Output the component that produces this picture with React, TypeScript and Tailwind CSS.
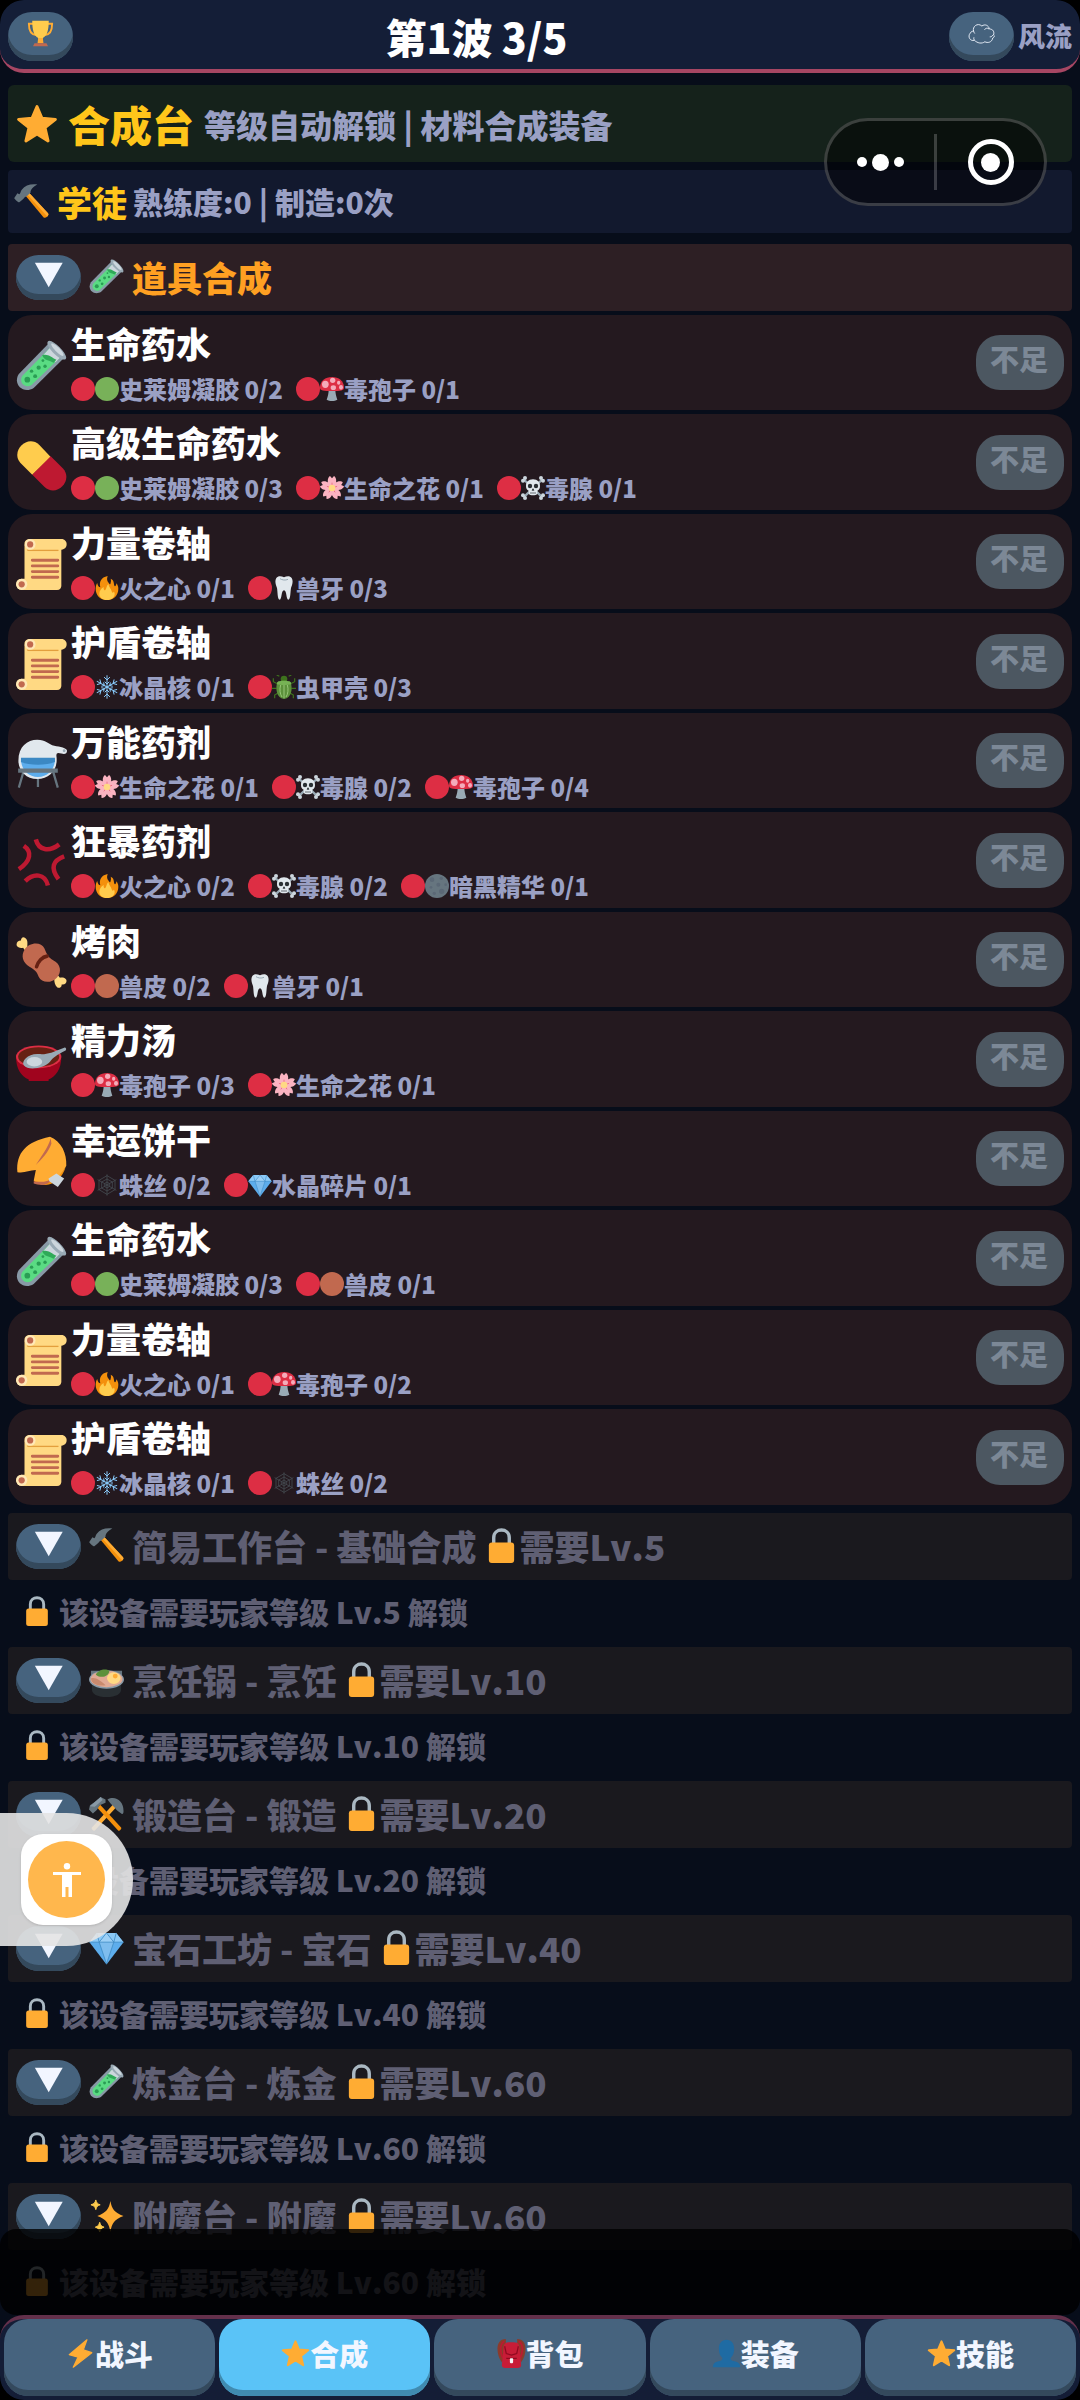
import type { ReactNode } from 'react';
import { clsx } from 'clsx';

/* ---------- Icons ---------- */

const ICONS: Record<string, ReactNode> = {
  red: <circle cx="18" cy="18" r="18" fill="#dd2e44" />,
  green: <circle cx="18" cy="18" r="18" fill="#78b159" />,
  brown: <circle cx="18" cy="18" r="18" fill="#c1694f" />,
  dark: (
    <>
      <circle cx="18" cy="18" r="18" fill="#66757f" />
      <g fill="#5b6876">
        <circle cx="10.5" cy="8.5" r="3.5" />
        <circle cx="20" cy="16" r="3" />
        <circle cx="24.5" cy="6.5" r="2.5" />
        <circle cx="9" cy="20" r="2" />
        <circle cx="25" cy="26" r="4" />
        <circle cx="14" cy="29" r="2.5" />
        <circle cx="31" cy="16" r="2" />
      </g>
    </>
  ),
  star: (
    <path
      d="M18 3l4.300 10.100 11.500.900-8.900 7.200 2.600 11.300L18 26.600l-9.500 5.900 2.600-11.300-8.900-7.200 11.500-.900z"
      fill="#ffac33"
      stroke="#ffac33"
      strokeWidth="2.500"
      strokeLinejoin="round"
    />
  ),
  trophy: (
    <>
      <path
        d="M9 5H2.500c0 8 1.500 14.500 9.500 15M27 5h6.500c0 8-1.500 14.500-9.500 15"
        fill="none"
        stroke="#ffac33"
        strokeWidth="2.500"
      />
      <path d="M7 1h22c0 12-2 20-8 23v6h-6v-6C9 21 7 13 7 1z" fill="#ffcc4d" />
      <path d="M15 24h6l1 7h-8z" fill="#ffac33" />
      <path d="M10 31h16l2 4H8z" fill="#c1694f" />
    </>
  ),
  hammer: (
    <>
      <path d="M11.500 11.500l3.500-3 20 21.500c1.500 2-2.500 6-4.500 4.500z" fill="#f4900c" />
      <path d="M13 10l2-1.500 20 21.500c.8 1 .2 2.500-.8 3.500z" fill="#ffac33" />
      <path
        d="M24 .6C17-.3 11.500 1.500 8 6c-1.500 2-1 3.500-2.500 4.600L3.500 9.500.3 14.300c-.5.800 4.200 5 5.200 4.500l4-3.300c.8-1.500 2-2.500 3.500-3l4-3.500C17 6 19 3.500 24 .6z"
        fill="#66757f"
      />
    </>
  ),
  tools: (
    <>
      <path d="M24.500 9l3 3L6 35.500c-1.500 1-4-1.500-3-3z" fill="#ffac33" />
      <path d="M11.500 9l-3 3L30 35.500c1.500 1 4-1.500 3-3z" fill="#f4900c" />
      <path d="M19 3.500C27-1 36 5 35.500 16c0 3-1.500 3-3 1.500-2-2-4-2.500-5-4.500l-4-4c-1-1-2.500-3-4.500-5.500z" fill="#66757f" />
      <path d="M17 3.500L12 1 5.500 6.500 1 9.500 0 14l4 4 4-3.500 3-5L17 7z" fill="#66757f" />
      <path d="M12 1L1 10.500l5 .500 8-7z" fill="#8899a6" />
    </>
  ),
  tube: (
    <>
      <path d="M23 2.500L33.500 13 12.500 33.800C5 38.500-2.500 31 2 24z" fill="#8899a6" />
      <path d="M24 5.500l7 7L11 31.800c-4.500 3-9.500-2-6.500-6.500z" fill="#5adb83" />
      <path d="M24 5.500l7 7-3 3c-3-2-6.500-1.500-9-4.500z" fill="#ccd6dd" />
      <path d="M18.500 10.800c4-1.300 6.500 1.500 10 3.200l-2 2c-4-2-6-1-8-5.200z" fill="#2faa58" />
      <path d="M22.500 1c2.500-3 15.500 10 12.500 12.500s-15-9.500-12.500-12.500z" fill="#99aab5" />
      <path d="M25 2.500c2-1 9.500 6.500 8.500 8.500S23.500 4 25 2.500z" fill="#ccd6dd" />
      <g fill="#2a9d54">
        <circle cx="8" cy="28" r="2" />
        <circle cx="13.500" cy="25.500" r="1.400" />
        <circle cx="11" cy="22" r="1.200" />
        <circle cx="16" cy="19.500" r="1.500" />
        <circle cx="20.500" cy="18.500" r="1.200" />
        <circle cx="19" cy="14.500" r="1" />
      </g>
    </>
  ),
  pill: (
    <>
      <path d="M16.500 3.500L24.500 12 11.500 24.500 3 16C-4 8 8-4.500 16.500 3.500z" fill="#ffcc4d" />
      <path d="M24.500 11.500L33 20c8 8.500-4.500 21-13 13l-8.500-8.500z" fill="#be1931" />
    </>
  ),
  scroll: (
    <>
      <path d="M6 4h26v29c0 1.500-1 3-3 3H6z" fill="#ffd983" />
      <path d="M8 4h22v4.500H8z" fill="#e39f3d" />
      <path d="M6 3c0-1.500 1.500-3 4-3h22c5 0 5 7.500 0 7.500H9C7 7.500 6 5 6 3z" fill="#ffd983" />
      <path d="M4 36c-5 0-5-8 0-8h4v8z" fill="#ffd983" />
      <circle cx="10" cy="3.800" r="3.800" fill="#ffe8b6" />
      <circle cx="10" cy="3.800" r="2.200" fill="#c1694f" />
      <circle cx="4" cy="32" r="4" fill="#ffe8b6" />
      <circle cx="4" cy="32" r="2.200" fill="#c1694f" />
      <path d="M11.500 15h18M11.500 19h18M11.500 23h18M11.500 27h18" stroke="#c1694f" strokeWidth="2" strokeLinecap="round" />
    </>
  ),
  alembic: (
    <>
      <path d="M5.500 23L2 35M26 23l3.500 12M15.500 26v8.500" stroke="#66757f" strokeWidth="1.600" />
      <path
        d="M1.700 16C1.700 6 8 1.200 15 1.200c6 0 8 3.300 12 4.300 4 .8 9 1.500 9 3.500 0 2.500-2 2.500-4 2-2-.6-3.500-1-3.500 1.500C30 22 24 29 15 29 7 29 1.700 23 1.700 16z"
        fill="#e1e8ed"
      />
      <circle cx="34" cy="9" r="1" fill="#99aab5" />
      <path d="M3.500 15h24c0 7-5 12.500-12 12.500S3.500 22 3.500 15z" fill="#5dadec" />
      <path d="M3.500 14h24v3c-6 2.500-18 2.500-24 0z" fill="#3b88c3" />
      <path d="M1.500 21.500h28v3h-28z" fill="#66757f" />
    </>
  ),
  anger: (
    <g fill="none" stroke="#be1931" strokeWidth="3.200">
      <path d="M5.500 5.500c6 4 5 11-3.500 16.500" />
      <path d="M14 1c2 8 9.500 9 16.500 3.500" />
      <path d="M34 13c-8 3-10 8-4 16" />
      <path d="M6.500 30.500c6-6 14-5.500 16 3" />
    </g>
  ),
  meat: (
    <>
      <path d="M8 7c0-3 .5-5-1.500-6.300C5-.4 3.500.600 3.500 2.500 1.500 2.500 0 4 .5 6c.5 1.500 3 2 4.500 1.500L9 13l3-3.500z" fill="#ffd983" />
      <path d="M27 29.500c0 2.500.5 4.500 2 6 1.500 1 3.500 0 3.200-2 2.500.500 4-1.500 3.300-3.300-.8-1.700-3-1.700-4.500-1.500L27 24z" fill="#ffd983" />
      <path
        d="M6 9c3-5.500 12-6 14-1 2 4.500 2.500 6.500 6.500 8.500 5 2.500 6 8 2.500 12-4 4.500-11 4-13-.5-1.500-4-3-5-6.500-7C4.500 18 3.500 13 6 9z"
        fill="#c1694f"
      />
      <path d="M22 13.500c-3.500.5-6.500 4-7.500 7.500" fill="none" stroke="#662113" strokeWidth="2.500" strokeLinecap="round" />
    </>
  ),
  soup: (
    <>
      <path d="M0 14h32c0 9-4 14-9 16v1H9v-1C4 28 0 23 0 14z" fill="#a0041e" />
      <ellipse cx="16" cy="14" rx="16" ry="8" fill="#dd2e44" />
      <ellipse cx="16" cy="14" rx="14.500" ry="6.800" fill="#662113" />
      <path d="M34 7.500c1-.5 2 1 1 2-6 3-9 5-11 8-3 4-15 7-18.500 2.500-2-3 3-8.500 10.500-8 6 .500 9-1 18-4.500z" fill="#99aab5" />
      <ellipse cx="13" cy="17.500" rx="5.500" ry="3.300" fill="#ccd6dd" />
    </>
  ),
  cookie: (
    <>
      <path d="M13 31c7 3 16 0 22-9-2 7-8 12.500-14 12.500-3 0-6-1-8-1.500z" fill="#f4900c" />
      <path d="M1 25.500C0 12 7 4 24 .5c8 3 12 12 11.500 20.500C33 26 27 33 20 33c-3 0-5-1-7.500-1.500L14 24C9 24 6 26.500 1 25.500z" fill="#ffac33" />
      <path d="M24.500 1.500c-2 7-7 13-10.500 19 4-4 9-9 11-15z" fill="#c1694f" />
      <path d="M12.500 32c6 1 11 0 15-3.500-3 4-6 6-9 6-2.500 0-4.500-.5-6-1z" fill="#c1694f" />
      <path d="M23 30l5.500-3.500 5.500 3.500-4.500 6-6-4z" fill="#ccd6dd" />
    </>
  ),
  mushroom: (
    <>
      <path d="M13 18h10c0 7 1 10 3 16-4 2.500-12 2.500-16 0 2-6 3-9 3-16z" fill="#99aab5" />
      <path d="M0 16C0 6 8 0 18 0s18 6 18 16c0 4-5 5-18 5S0 20 0 16z" fill="#dd2e44" />
      <g fill="#f4abba">
        <ellipse cx="19" cy="5" rx="4" ry="4" />
        <ellipse cx="8" cy="11" rx="5" ry="5.500" />
        <ellipse cx="28" cy="8.500" rx="2.500" ry="3" />
        <ellipse cx="20" cy="16" rx="4" ry="3.500" />
        <ellipse cx="31.500" cy="15.500" rx="3" ry="3.500" />
      </g>
    </>
  ),
  blossom: (
    <>
      <g fill="#fbb3c1">
        {[0, 72, 144, 216, 288].map((deg) => (
          <path key={deg} d="M18 20C9 12 11 2 15 0l3 3.500L21 0c4 2 6 12-3 20z" transform={`rotate(${deg} 18 18)`} />
        ))}
      </g>
      <g stroke="#ea596e" strokeWidth="1">
        {[0, 72, 144, 216, 288].map((deg) => (
          <path key={deg} d="M18 18V10" transform={`rotate(${deg} 18 18)`} />
        ))}
      </g>
      <circle cx="18" cy="18" r="5" fill="#ffd983" />
    </>
  ),
  skull: (
    <>
      <path d="M5 6l26 25M31 6L5 31" stroke="#99aab5" strokeWidth="3.500" />
      <g fill="#ccd6dd">
        <circle cx="6" cy="3" r="3" />
        <circle cx="3" cy="7" r="3" />
        <circle cx="30" cy="3" r="3" />
        <circle cx="33" cy="7" r="3" />
        <circle cx="6" cy="33" r="3" />
        <circle cx="3" cy="29" r="3" />
        <circle cx="30" cy="33" r="3" />
        <circle cx="33" cy="29" r="3" />
      </g>
      <path d="M18 5c7 0 10.500 4.500 10.500 10 0 4-1.500 6-4 7v5c-2 2.500-11 2.500-13 0v-5c-2.500-1-4-3-4-7C7.500 9.500 11 5 18 5z" fill="#e1e8ed" />
      <circle cx="13.500" cy="15" r="3.300" fill="#292f33" />
      <circle cx="22.500" cy="15" r="3.300" fill="#292f33" />
      <path d="M16.500 21.500L18 19l1.500 2.500zM15 24v3M18 24v3M21 24v3" fill="#292f33" stroke="#292f33" />
    </>
  ),
  fire: (
    <>
      <path
        d="M35 19c0 10-7 17-17 17S1 29 1 19c0-3 .8-6 2.300-8.500.7 4 2.700 6.500 4.700 6.500C6 9 9 2 19 0c-2 6 0 8 2 11 1 2 2 2 2.500-1 1-3 0-6 0-6 6 2 4 9 6 11 1 1 2.500-1 2.500-4 1.800 2 3 5 3 8z"
        fill="#f4900c"
      />
      <path
        d="M28 23.500c-.8 3-2.500 1.500-3-.500-.8-4-4-6-5-11-3 3-2.500 7-4.500 9-1.500 1.500-3-1-2.500-4.500-4 2.500-6.500 6-6.500 10.500 0 5 4.500 9 11.500 9s11.500-4 11.500-9c0-2-.5-3-1.500-3.500z"
        fill="#ffcc4d"
      />
    </>
  ),
  tooth: (
    <>
      <path
        d="M6.500 3C9-.5 14 0 18 2c4-2 9-2.500 11.500 1 3 5 .5 11-1 15-1 5-.5 17-4 17.500-3.500 0-2-14-6.500-14S15 35.500 11.500 35.500C8 35 8.500 23 7.500 18c-1.500-4-4-10-1-15z"
        fill="#e1e8ed"
      />
      <path d="M12 4c3 2 8 3 12 1" fill="none" stroke="#99aab5" strokeWidth="1.500" />
    </>
  ),
  snow: (
    <g fill="none" stroke="#88c9f9" strokeWidth="1.500" strokeLinecap="round">
      {[0, 60, 120, 180, 240, 300].map((deg) => (
        <path key={deg} d="M18 18V1M14 3.500l4 4 4-4M15 10.500l3 3 3-3" transform={`rotate(${deg} 18 18)`} />
      ))}
    </g>
  ),
  beetle: (
    <>
      <path d="M11 2L7 0M25 2l4-2M8 13L2 10V5M28 13l6-3V5M7 20H0M29 20h7M9 27l-5 3v5M27 27l5 3v5" stroke="#3e721d" strokeWidth="1.800" fill="none" />
      <circle cx="18" cy="6" r="5" fill="#3e721d" />
      <path d="M8 11c3-3 17-3 20 0 3 8 2 24-10 25C6 35 5 19 8 11z" fill="#5c913b" />
      <path d="M8 11c3-3 17-3 20 0l.8 3c-6 1.500-15.500 1.500-21.500 0z" fill="#77b255" />
      <path d="M13 15c-2 6-1 14 2 18M18 15v20M23 15c2 6 1 14-2 18" stroke="#a6d388" strokeWidth="1.200" fill="none" />
    </>
  ),
  web: (
    <g fill="none" stroke="#454b52" strokeWidth="1.200">
      <path d="M18 2v32M4 10l28 16M32 10L4 26" />
      <path d="M18 4L6 11v14l12 7 12-7V11z" />
      <path d="M18 9l-8 4.500v9L18 27l8-4.500v-9z" />
      <path d="M18 13.500L14 16v4l4 2.500 4-2.500v-4z" />
    </g>
  ),
  gem: (
    <>
      <path d="M8 3h20l7.500 9.500L18 35.500.5 12.500z" fill="#5dadec" />
      <path d="M8 3h20l7.500 9.500H.5z" fill="#8ccaf7" />
      <path d="M18 3l-7.500 9.500h15zM10.500 12.500L18 35.500l7.500-23z" fill="#bdddf4" fillOpacity=".35" />
      <path d="M8 3l2.500 9.500L18 3l7.500 9.500L28 3M.5 12.500h35M10.500 12.500L18 35l7.500-22.500" fill="none" stroke="#3b88c3" strokeWidth=".8" />
    </>
  ),
  lock: (
    <>
      <path d="M10 18v-8c0-10.500 16-10.500 16 0v8" fill="none" stroke="#aab8c2" strokeWidth="3.500" />
      <rect x="5" y="15" width="26" height="21" rx="3" fill="#ffac33" />
    </>
  ),
  pan: (
    <>
      <path d="M2 9h32v5H2z" fill="#66757f" />
      <path d="M3 18h30v10c0 5-5 8-15 8S3 33 3 28z" fill="#292f33" />
      <ellipse cx="18" cy="18" rx="18" ry="9.500" fill="#8899a6" />
      <ellipse cx="18" cy="17.500" rx="16.500" ry="8.500" fill="#e0aa94" />
      <path d="M2 17c4-2 10 2 15 7-8 1-14-1-15-7z" fill="#c98a6e" />
      <ellipse cx="25.500" cy="16.500" rx="7" ry="6" fill="#ffd983" />
      <circle cx="27" cy="14.500" r="2.500" fill="#ffac33" />
      <path d="M7 13c2-5 10-7 14-4 0 5-8 9-14 4z" fill="#5c913b" />
    </>
  ),
  sparkles: (
    <>
      <path d="M22 3c1.500 8 4 12 13.500 15.500C26 22 23.500 26 22 35c-1.500-9-4-13-13.500-16.500C18 15 20.500 11 22 3z" fill="#ffac33" />
      <path d="M7 2c.8 3 1.500 4 4.500 5-3 1-3.700 2-4.500 5-.8-3-1.500-4-5-5 3.500-1 4.200-2 5-5z" fill="#ffcc4d" stroke="#ffcc4d" />
      <path d="M11 25c.8 3 1.500 4 4.500 5-3 1-3.700 2-4.500 5-.8-3-1.500-4-4.500-5 3-1 3.700-2 4.500-5z" fill="#ffcc4d" stroke="#ffcc4d" />
    </>
  ),
  bolt: (
    <path d="M26 1L4 19.500l11 3L9 35 32 17l-10.500-3.500z" fill="#ffac33" stroke="#ffac33" strokeWidth="1.500" strokeLinejoin="round" />
  ),
  backpack: (
    <>
      <path d="M11 0C-3 0-1 20 6 29l5-9V8zM25 0c14 0 12 20 5 29l-5-9V8z" fill="#8c3a2b" />
      <path d="M9 3c-5 2-6 12-2 20M27 3c5 2 6 12 2 20" fill="none" stroke="#be1931" strokeWidth="2" />
      <path d="M8 12C8 5 11 4 18 4s10 1 10 8l2 21c0 2-2 3-4 3H10c-2 0-4-1-4-3z" fill="#c81c37" />
      <path d="M9.500 9l2 9 6.500 2 6.500-2 2-9M11.500 24h13" fill="none" stroke="#8f0a20" strokeWidth="1.500" />
      <rect x="16" y="24" width="4" height="6" rx="1" fill="#f5f8fa" />
    </>
  ),
  person: (
    <path
      d="M18 1c6 0 9.500 4.500 9.500 11 0 5-1.500 9-4.500 11.500 0 3 2 3.500 6 4.500 4 1 6 3 6 7H1c0-4 2-6 6-7 4-1 6-1.500 6-4.500C10 21 8.500 17 8.500 12 8.500 5.500 12 1 18 1z"
      fill="#1f6ba3"
    />
  ),
  cloud: (
    <path
      d="M8.500 27C3 29-1 22 3 17.500c1-2 3-3 4.500-2.500-2-6 5-12 11-7 4-3 9-1 10 4 5 0 7 4 5.500 8 2 1 1 3-1 4-1 6-7 7-10.500 5-4 3-10 2-14-2zM9 18c-1-1-1-2-1.500-3M22 13c1-2 4-3 6-1M33 20c-1 2-2 2.500-4 2.500M8.500 27c-1-2-1-3-.5-4"
      fill="none"
      stroke="#f2f6ff"
      strokeWidth="1.200"
    />
  ),
  down: <path d="M3 5h29.500L17.700 31z" fill="#f2f6ff" />,
};

function Icon({ name, className }: { name: string; className: string }) {
  return (
    <svg viewBox="0 0 36 36" className={clsx('shrink-0', className)} aria-hidden="true">
      {ICONS[name]}
    </svg>
  );
}

/* ---------- Data ---------- */

type Material = [icon: string, name: string, need: number];

const SLIME = (n: number): Material => ['green', '史莱姆凝胶', n];
const SPORE = (n: number): Material => ['mushroom', '毒孢子', n];
const FLOWER = (n: number): Material => ['blossom', '生命之花', n];
const GLAND = (n: number): Material => ['skull', '毒腺', n];
const HEART = (n: number): Material => ['fire', '火之心', n];
const TOOTH = (n: number): Material => ['tooth', '兽牙', n];
const ICE = (n: number): Material => ['snow', '冰晶核', n];
const HIDE = (n: number): Material => ['brown', '兽皮', n];
const SILK = (n: number): Material => ['web', '蛛丝', n];

const recipes: { icon: string; name: string; materials: Material[] }[] = [
  { icon: 'tube', name: '生命药水', materials: [SLIME(2), SPORE(1)] },
  { icon: 'pill', name: '高级生命药水', materials: [SLIME(3), FLOWER(1), GLAND(1)] },
  { icon: 'scroll', name: '力量卷轴', materials: [HEART(1), TOOTH(3)] },
  { icon: 'scroll', name: '护盾卷轴', materials: [ICE(1), ['beetle', '虫甲壳', 3]] },
  { icon: 'alembic', name: '万能药剂', materials: [FLOWER(1), GLAND(2), SPORE(4)] },
  { icon: 'anger', name: '狂暴药剂', materials: [HEART(2), GLAND(2), ['dark', '暗黑精华', 1]] },
  { icon: 'meat', name: '烤肉', materials: [HIDE(2), TOOTH(1)] },
  { icon: 'soup', name: '精力汤', materials: [SPORE(3), FLOWER(1)] },
  { icon: 'cookie', name: '幸运饼干', materials: [SILK(2), ['gem', '水晶碎片', 1]] },
  { icon: 'tube', name: '生命药水', materials: [SLIME(3), HIDE(1)] },
  { icon: 'scroll', name: '力量卷轴', materials: [HEART(1), SPORE(2)] },
  { icon: 'scroll', name: '护盾卷轴', materials: [ICE(1), SILK(2)] },
];

const stations = [
  { icon: 'hammer', name: '简易工作台 - 基础合成', level: 5 },
  { icon: 'pan', name: '烹饪锅 - 烹饪', level: 10 },
  { icon: 'tools', name: '锻造台 - 锻造', level: 20 },
  { icon: 'gem', name: '宝石工坊 - 宝石', level: 40 },
  { icon: 'tube', name: '炼金台 - 炼金', level: 60 },
  { icon: 'sparkles', name: '附魔台 - 附魔', level: 60 },
];

const tabs = [
  { icon: 'bolt', label: '战斗' },
  { icon: 'star', label: '合成', active: true },
  { icon: 'backpack', label: '背包' },
  { icon: 'person', label: '装备' },
  { icon: 'star', label: '技能' },
];

/* ---------- Parts ---------- */

function PillButton({ icon, label, className }: { icon: string; label: string; className: string }) {
  return (
    <button
      type="button"
      aria-label={label}
      className={clsx(
        'flex w-[65px] shrink-0 items-center justify-center rounded-3xl bg-[#46637e] pb-[6px] shadow-[inset_0_-6px_0_#34495c]',
        className,
      )}
    >
      <Icon name={icon} className={icon === 'down' ? 'size-[34px]' : 'size-[27px]'} />
    </button>
  );
}

function RecipeCard({ icon, name, materials }: { icon: string; name: string; materials: Material[] }) {
  return (
    <li className="flex items-center rounded-3xl bg-[#24191f] px-2 odd:h-[95px] even:h-[96px]">
      <Icon name={icon} className="mt-[6px] mr-1 size-[51px]" />
      <div className="min-w-0 flex-1">
        <h3 className="text-[35px] leading-[44px] text-white">{name}</h3>
        <ul className="mt-2 flex gap-[13px] text-[24px] leading-[32px] text-[#9aa0c4]">
          {materials.map(([matIcon, matName, need]) => (
            <li key={matName} className="flex items-center whitespace-nowrap">
              <Icon name="red" className="size-6" />
              <Icon name={matIcon} className="size-6" />
              {matName} 0/{need}
            </li>
          ))}
        </ul>
      </div>
      <button type="button" disabled className="h-[55px] w-[88px] rounded-3xl bg-[#4c5761] pr-[2px] pb-2 text-[29px] leading-none text-[#7c8896]">
        不足
      </button>
    </li>
  );
}

function LockedStation({ icon, name, level }: { icon: string; name: string; level: number }) {
  return (
    <section className="text-[#5f5f73]">
      <div className="flex h-[67px] items-center gap-2 rounded bg-[#1a191e] px-2">
        <PillButton icon="down" label={name} className="h-[45px]" />
        <h2 className="flex items-center gap-2 pb-[2px] text-[35px] leading-[50px]">
          <Icon name={icon} className="size-[35px]" />
          {name}
          <span className="flex items-center">
            <Icon name="lock" className="size-[35px]" />
            需要Lv.{level}
          </span>
        </h2>
      </div>
      <p className="flex h-[67px] items-center gap-[7px] px-[14px] pb-[5px] text-[30px] leading-[44px]">
        <Icon name="lock" className="size-[30px]" />
        该设备需要玩家等级 Lv.{level} 解锁
      </p>
    </section>
  );
}

/* Host app menu that floats over the page */
function Capsule() {
  return (
    <div className="absolute top-[118px] right-[33px] flex h-[88px] w-[223px] items-center rounded-full border-[3px] border-white/20 bg-black/50">
      <button type="button" aria-label="更多" className="flex flex-1 items-center justify-center gap-[5px]">
        <span className="size-[10px] rounded-full bg-white" />
        <span className="size-[17px] rounded-full bg-white" />
        <span className="size-[10px] rounded-full bg-white" />
      </button>
      <span className="h-[56px] w-[3px] bg-white/20" />
      <button type="button" aria-label="关闭" className="flex flex-1 items-center justify-center">
        <span className="flex size-[46px] items-center justify-center rounded-full border-[5px] border-white">
          <span className="size-[19px] rounded-full bg-white" />
        </span>
      </button>
    </div>
  );
}

function AccessibilityHandle() {
  return (
    <div className="absolute top-[1813px] left-0 flex h-[133px] w-[133px] items-center rounded-r-full bg-[#e4e4e4]/90 pl-[21px]">
      <button type="button" aria-label="无障碍" className="flex size-[91px] items-center justify-center rounded-[22px] bg-white shadow">
        <span className="flex size-[77px] items-center justify-center rounded-full bg-[#ffb74d]">
          <svg viewBox="0 0 28 34" className="h-[34px] w-[28px]" fill="#fff" aria-hidden="true">
            <circle cx="14" cy="3.200" r="3.200" />
            <path d="M0 9h28v3h-9v22h-3.500V24h-3v10H9V12H0z" />
          </svg>
        </span>
      </button>
    </div>
  );
}

export default function App() {
  return (
    <div className="bg-black">
      <div
        className="relative flex h-screen flex-col overflow-hidden rounded-3xl bg-[#070d1a] font-black [font-kerning:none]"
        style={{ fontFamily: '"Noto Sans CJK SC", sans-serif' }}
      >
        <header className="grid h-[73px] shrink-0 grid-cols-[1fr_auto] items-center gap-1 rounded-3xl border-b-4 border-[#a64663] bg-[#141e37] px-2 pt-1">
          <PillButton icon="trophy" label="排行榜" className="col-start-1 row-start-1 h-[49px]" />
          <h1 className="col-start-1 row-start-1 justify-self-center pb-[2px] text-[41px] leading-[60px] text-white">第1波 3/5</h1>
          <div className="flex items-center gap-1 text-[27px] text-[#9aa0c4]">
            <PillButton icon="cloud" label="云存档" className="h-[49px]" />
            风流
          </div>
        </header>

        <main className="min-h-0 flex-1 overflow-y-auto px-2 pt-3 [scrollbar-width:none]">
          <div className="flex h-[77px] items-center rounded-md bg-[#15221b] px-2">
            <Icon name="star" className="size-[42px]" />
            <h2 className="ml-[10px] text-[42px] leading-[60px] text-[#ffc61a]">合成台</h2>
            <p className="ml-[10px] text-[32px] text-[#9aa0c4]">等级自动解锁 | 材料合成装备</p>
          </div>

          <div className="mt-2 flex h-[63px] items-center rounded bg-[#12192e] px-[6px]">
            <Icon name="hammer" className="size-[35px]" />
            <h2 className="ml-2 text-[35px] leading-[50px] text-[#ffc61a]">学徒</h2>
            <p className="ml-[6px] text-[30px] text-[#9aa0c4]">熟练度:0 | 制造:0次</p>
          </div>

          <section className="mt-[11px]">
            <div className="flex h-[67px] items-center gap-2 rounded bg-[#2d1f24] px-2">
              <PillButton icon="down" label="道具合成" className="h-[45px]" />
              <h2 className="flex items-center gap-2 pb-[2px] text-[35px] leading-[50px] text-[#ffa022]">
                <Icon name="tube" className="size-[35px]" />
                道具合成
              </h2>
            </div>
            <ul className="mt-1 flex flex-col gap-1">
              {recipes.map((recipe, i) => (
                <RecipeCard key={i} {...recipe} />
              ))}
            </ul>
          </section>

          <div className="mt-2">
            {stations.map((station) => (
              <LockedStation key={station.name} {...station} />
            ))}
          </div>
        </main>

        <div className="relative shrink-0">
          <div className="absolute inset-x-0 bottom-full h-[86px] rounded-2xl bg-black/80" />
          <nav className="flex h-[85px] gap-1 rounded-3xl border-t-4 border-[#63304b] bg-[#141d36] px-1 pb-1">
            {tabs.map(({ icon, label, active }) => (
              <button
                key={label}
                type="button"
                className={clsx(
                  'flex flex-1 items-center justify-center rounded-3xl pb-[8px] text-[29px] text-[#f2f6ff]',
                  active ? 'bg-[#5ac3f7] shadow-[inset_0_-6px_0_#408bb0]' : 'bg-[#46637e] shadow-[inset_0_-6px_0_#34495c]',
                )}
              >
                <Icon name={icon} className="size-[29px]" />
                {label}
              </button>
            ))}
          </nav>
        </div>

        <Capsule />
        <AccessibilityHandle />
      </div>
    </div>
  );
}
